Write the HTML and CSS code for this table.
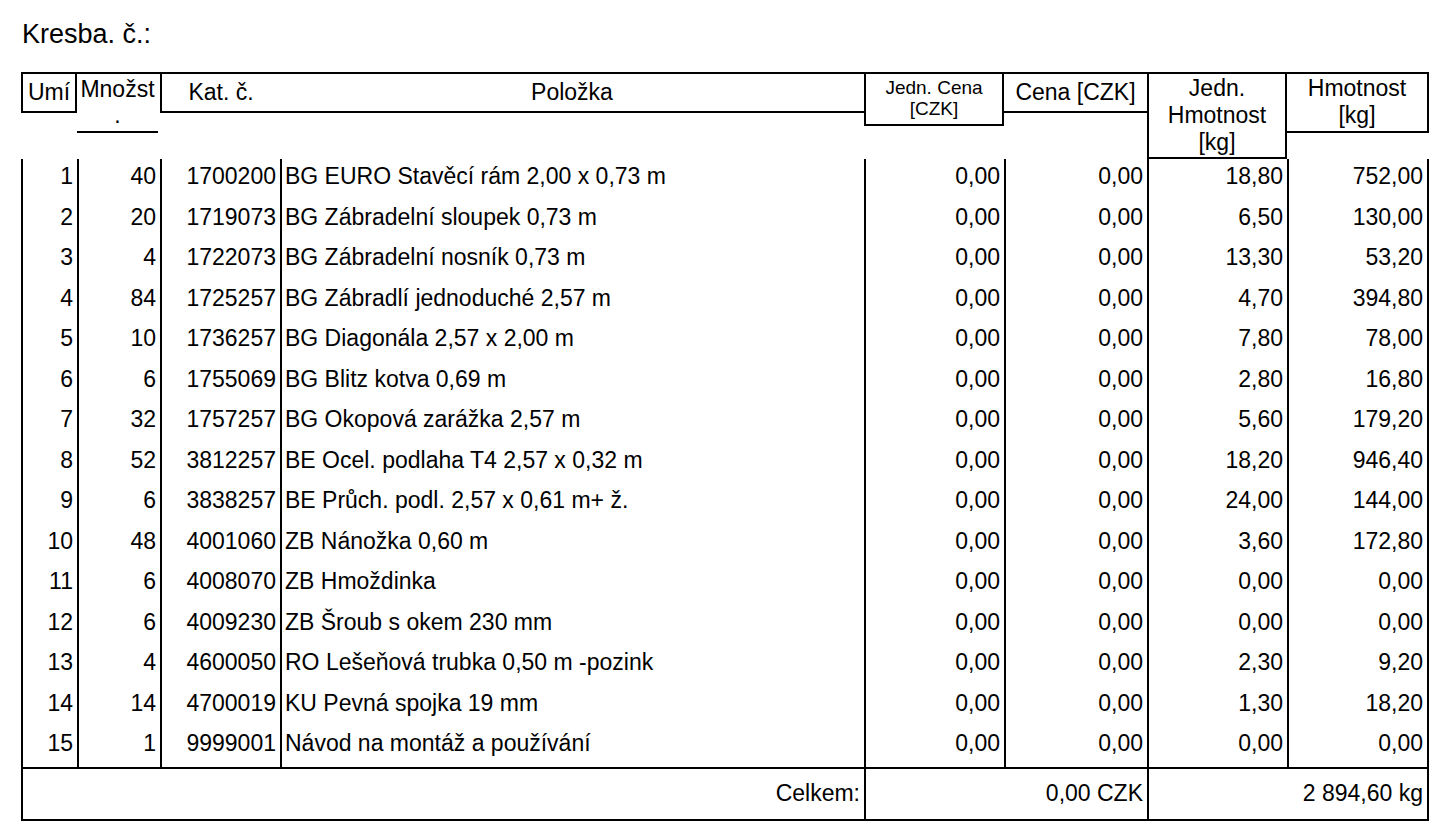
FILE: index.html
```html
<!DOCTYPE html>
<html lang="cs">
<head>
<meta charset="utf-8">
<title>Kresba</title>
<link rel="stylesheet" href="styles.css">
</head>
<body>
<div class="page">
  <div class="title">Kresba. č.:</div>
  <div class="sheet">
    <div class="head">
      <div class="h h-umi">Umí</div>
      <div class="h h-mnoz">Množst<br>.</div>
      <div class="h h-kat">Kat. č.</div>
      <div class="h h-pol">Položka</div>
      <div class="h h-jcena">Jedn. Cena<br>[CZK]</div>
      <div class="h h-cena">Cena [CZK]</div>
      <div class="h h-jhm">Jedn.<br>Hmotnost<br>[kg]</div>
      <div class="h h-hm">Hmotnost<br>[kg]</div>
    </div>
    <div class="body">
      <div class="row"><div class="c n">1</div><div class="c n">40</div><div class="c n">1700200</div><div class="c t">BG EURO Stavěcí rám 2,00 x 0,73 m</div><div class="c n">0,00</div><div class="c n">0,00</div><div class="c n">18,80</div><div class="c n last">752,00</div></div>
      <div class="row"><div class="c n">2</div><div class="c n">20</div><div class="c n">1719073</div><div class="c t">BG Zábradelní sloupek 0,73 m</div><div class="c n">0,00</div><div class="c n">0,00</div><div class="c n">6,50</div><div class="c n last">130,00</div></div>
      <div class="row"><div class="c n">3</div><div class="c n">4</div><div class="c n">1722073</div><div class="c t">BG Zábradelní nosník 0,73 m</div><div class="c n">0,00</div><div class="c n">0,00</div><div class="c n">13,30</div><div class="c n last">53,20</div></div>
      <div class="row"><div class="c n">4</div><div class="c n">84</div><div class="c n">1725257</div><div class="c t">BG Zábradlí jednoduché 2,57 m</div><div class="c n">0,00</div><div class="c n">0,00</div><div class="c n">4,70</div><div class="c n last">394,80</div></div>
      <div class="row"><div class="c n">5</div><div class="c n">10</div><div class="c n">1736257</div><div class="c t">BG Diagonála 2,57 x 2,00 m</div><div class="c n">0,00</div><div class="c n">0,00</div><div class="c n">7,80</div><div class="c n last">78,00</div></div>
      <div class="row"><div class="c n">6</div><div class="c n">6</div><div class="c n">1755069</div><div class="c t">BG Blitz kotva 0,69 m</div><div class="c n">0,00</div><div class="c n">0,00</div><div class="c n">2,80</div><div class="c n last">16,80</div></div>
      <div class="row"><div class="c n">7</div><div class="c n">32</div><div class="c n">1757257</div><div class="c t">BG Okopová zarážka 2,57 m</div><div class="c n">0,00</div><div class="c n">0,00</div><div class="c n">5,60</div><div class="c n last">179,20</div></div>
      <div class="row"><div class="c n">8</div><div class="c n">52</div><div class="c n">3812257</div><div class="c t">BE Ocel. podlaha T4 2,57 x 0,32 m</div><div class="c n">0,00</div><div class="c n">0,00</div><div class="c n">18,20</div><div class="c n last">946,40</div></div>
      <div class="row"><div class="c n">9</div><div class="c n">6</div><div class="c n">3838257</div><div class="c t">BE Průch. podl. 2,57 x 0,61 m+ ž.</div><div class="c n">0,00</div><div class="c n">0,00</div><div class="c n">24,00</div><div class="c n last">144,00</div></div>
      <div class="row"><div class="c n">10</div><div class="c n">48</div><div class="c n">4001060</div><div class="c t">ZB Nánožka 0,60 m</div><div class="c n">0,00</div><div class="c n">0,00</div><div class="c n">3,60</div><div class="c n last">172,80</div></div>
      <div class="row"><div class="c n">11</div><div class="c n">6</div><div class="c n">4008070</div><div class="c t">ZB Hmoždinka</div><div class="c n">0,00</div><div class="c n">0,00</div><div class="c n">0,00</div><div class="c n last">0,00</div></div>
      <div class="row"><div class="c n">12</div><div class="c n">6</div><div class="c n">4009230</div><div class="c t">ZB Šroub s okem 230 mm</div><div class="c n">0,00</div><div class="c n">0,00</div><div class="c n">0,00</div><div class="c n last">0,00</div></div>
      <div class="row"><div class="c n">13</div><div class="c n">4</div><div class="c n">4600050</div><div class="c t">RO Lešeňová trubka 0,50 m -pozink</div><div class="c n">0,00</div><div class="c n">0,00</div><div class="c n">2,30</div><div class="c n last">9,20</div></div>
      <div class="row"><div class="c n">14</div><div class="c n">14</div><div class="c n">4700019</div><div class="c t">KU Pevná spojka 19 mm</div><div class="c n">0,00</div><div class="c n">0,00</div><div class="c n">1,30</div><div class="c n last">18,20</div></div>
      <div class="row"><div class="c n">15</div><div class="c n">1</div><div class="c n">9999001</div><div class="c t">Návod na montáž a používání</div><div class="c n">0,00</div><div class="c n">0,00</div><div class="c n">0,00</div><div class="c n last">0,00</div></div>
    </div>
    <div class="total">
      <div class="tc tc-label">Celkem:</div>
      <div class="tc tc-price">0,00 CZK</div>
      <div class="tc tc-weight">2 894,60 kg</div>
    </div>
  </div>
</div>
</body>
</html>
```

FILE: styles.css
```css
html, body {
  margin: 0;
  padding: 0;
  background: #ffffff;
}

body {
  font-family: "Liberation Sans", Arial, sans-serif;
  color: #000;
}

.page {
  width: 1440px;
  height: 830px;
  overflow: hidden;
}

.title {
  font-size: 27px;
  line-height: 30px;
  padding: 19px 0 0 22px;
  height: 30px;
}

.sheet {
  margin: 23px 0 0 21px;
  width: 1408px;
  font-size: 23px;
}

.head,
.row {
  display: grid;
  grid-template-columns: 56px 83px 120px 584px 140px 143px 140px 142px;
}

.head {
  border-top: 2px solid #000;
  height: 85px;
  align-items: start;
}

.h {
  box-sizing: border-box;
  text-align: center;
  line-height: 26px;
  white-space: nowrap;
  border-bottom: 2px solid #000;
}

.h-umi {
  height: 39px;
  padding-top: 5px;
  border-left: 2px solid #000;
  border-right: 2px solid #000;
}

.h-mnoz {
  height: 59px;
  padding-top: 2px;
  margin-right: 2px;
}

.h-kat {
  height: 39px;
  padding-top: 5px;
  border-left: 2px solid #000;
}

.h-pol {
  height: 39px;
  padding-top: 5px;
}

.h-jcena {
  height: 52px;
  padding-top: 3px;
  font-size: 19px;
  line-height: 21px;
  border-left: 2px solid #000;
  border-right: 2px solid #000;
}

.h-cena {
  height: 39px;
  padding-top: 5px;
}

.h-jhm {
  height: 85px;
  padding-top: 1px;
  line-height: 27px;
  border-left: 2px solid #000;
  border-right: 2px solid #000;
}

.h-hm {
  height: 59px;
  padding-top: 1px;
  line-height: 27px;
  border-right: 2px solid #000;
}

.row {
  height: 40.5px;
}

.c {
  box-sizing: border-box;
  border-left: 2px solid #000;
  line-height: 26px;
  padding-top: 4px;
  white-space: nowrap;
}

.c.n {
  text-align: right;
  padding-right: 4px;
}

.c.t {
  text-align: left;
  padding-left: 3px;
}

.c.last {
  border-right: 2px solid #000;
}

.total {
  display: grid;
  grid-template-columns: 843px 283px 282px;
  height: 54px;
  box-sizing: border-box;
  border-top: 2px solid #000;
  border-bottom: 2px solid #000;
}

.tc {
  box-sizing: border-box;
  border-left: 2px solid #000;
  display: flex;
  align-items: center;
  justify-content: flex-end;
  padding-right: 4px;
  white-space: nowrap;
}

.tc-weight {
  border-right: 2px solid #000;
}
```
